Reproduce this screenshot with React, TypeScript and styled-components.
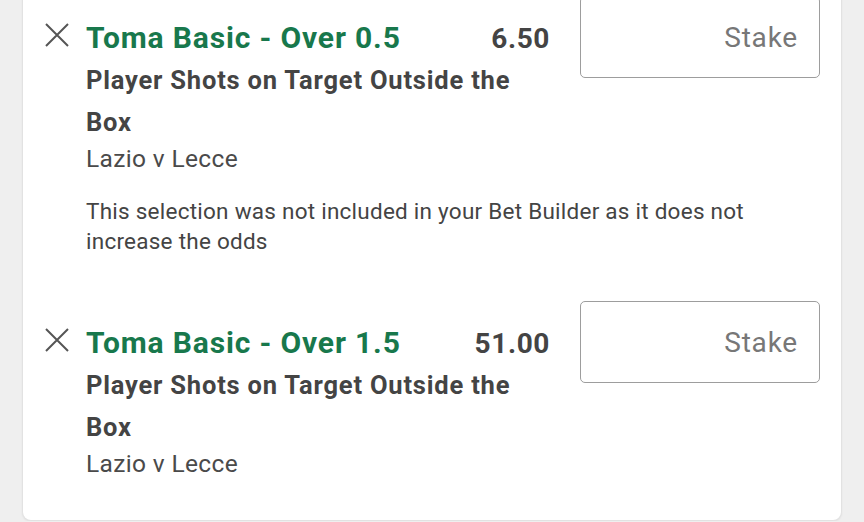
import React from 'react';
import styled, { createGlobalStyle } from 'styled-components';

type Selection = {
  id: number;
  title: string;
  odds: string;
  market: string;
  event: string;
  notice?: string;
};

const selections: Selection[] = [
  {
    id: 1,
    title: 'Toma Basic - Over 0.5',
    odds: '6.50',
    market: 'Player Shots on Target Outside the Box',
    event: 'Lazio v Lecce',
    notice: 'This selection was not included in your Bet Builder as it does not increase the odds',
  },
  {
    id: 2,
    title: 'Toma Basic - Over 1.5',
    odds: '51.00',
    market: 'Player Shots on Target Outside the Box',
    event: 'Lazio v Lecce',
  },
];

const GlobalStyle = createGlobalStyle`
  html, body {
    margin: 0;
    padding: 0;
    background: #efefef;
    overflow: hidden;
  }
  body {
    font-family: Roboto, "Liberation Sans", sans-serif;
  }
`;

const CloseIcon = () => (
  <svg width="24" height="24" viewBox="0 0 24 24" fill="none">
    <path d="M1 1 L23 23 M23 1 L1 23" stroke="#555" strokeWidth="2" />
  </svg>
);

const SelectionItem = ({ selection }: { selection: Selection }) => {
  return (
    <Item>
      <Header>
        <RemoveButton aria-label="Remove selection">
          <CloseIcon />
        </RemoveButton>
        <Info>
          <TitleRow>
            <Title>{selection.title}</Title>
            <Odds>{selection.odds}</Odds>
          </TitleRow>
          <Market>{selection.market}</Market>
          <Event>{selection.event}</Event>
        </Info>
        <StakeInput placeholder="Stake" />
      </Header>
      {selection.notice && <Notice>{selection.notice}</Notice>}
    </Item>
  );
};

const App = () => {
  return (
    <>
      <GlobalStyle />
      <Card>
        {selections.map(s => (
          <SelectionItem key={s.id} selection={s} />
        ))}
      </Card>
    </>
  );
};

const Card = styled.div`
  margin: -4px 22px 0;
  padding: 0 21px 41px 22px;
  background: #fff;
  border: 1px solid #e2e2e2;
  border-top: none;
  border-radius: 0 0 9px 9px;
  box-shadow: 0 1px 2px rgba(0, 0, 0, 0.06);
  display: flex;
  flex-direction: column;
  gap: 45px;
`;

const Item = styled.div`
  display: flex;
  flex-direction: column;
`;

const Header = styled.div`
  display: grid;
  grid-template-columns: 41px 1fr 240px;
  align-items: start;
`;

const RemoveButton = styled.button`
  margin: 27px 0 0;
  padding: 0;
  border: none;
  background: none;
  width: 24px;
  height: 24px;
  display: flex;
  cursor: pointer;
`;

const Info = styled.div`
  padding: 22px 30px 0 0;
  display: flex;
  flex-direction: column;
`;

const TitleRow = styled.div`
  display: flex;
  justify-content: space-between;
  align-items: baseline;
`;

const Title = styled.span`
  font-size: 30px;
  line-height: 40px;
  font-weight: 700;
  letter-spacing: 0.85px;
  color: #18784c;
`;

const Odds = styled.span`
  font-size: 28px;
  line-height: 40px;
  font-weight: 700;
  letter-spacing: 0.6px;
  color: #444;
`;

const Market = styled.div`
  font-size: 25.5px;
  line-height: 42px;
  font-weight: 700;
  letter-spacing: 0.8px;
  color: #444;
`;

const Event = styled.div`
  font-size: 24.5px;
  line-height: 31px;
  letter-spacing: 0.35px;
  color: #4a4a4a;
`;

const StakeInput = styled.input`
  box-sizing: border-box;
  width: 240px;
  height: 82px;
  padding: 0 21px 0 16px;
  border: 1.5px solid #9d9d9d;
  border-radius: 5px;
  background: #fff;
  font-family: Roboto, "Liberation Sans", sans-serif;
  font-size: 28px;
  letter-spacing: 0.8px;
  color: #444;
  text-align: right;
  outline: none;

  &::placeholder {
    color: #777;
  }
`;

const Notice = styled.p`
  margin: 22px 0 0 41px;
  font-size: 22.5px;
  line-height: 30px;
  letter-spacing: 0.25px;
  color: #444;
`;

export default App;
